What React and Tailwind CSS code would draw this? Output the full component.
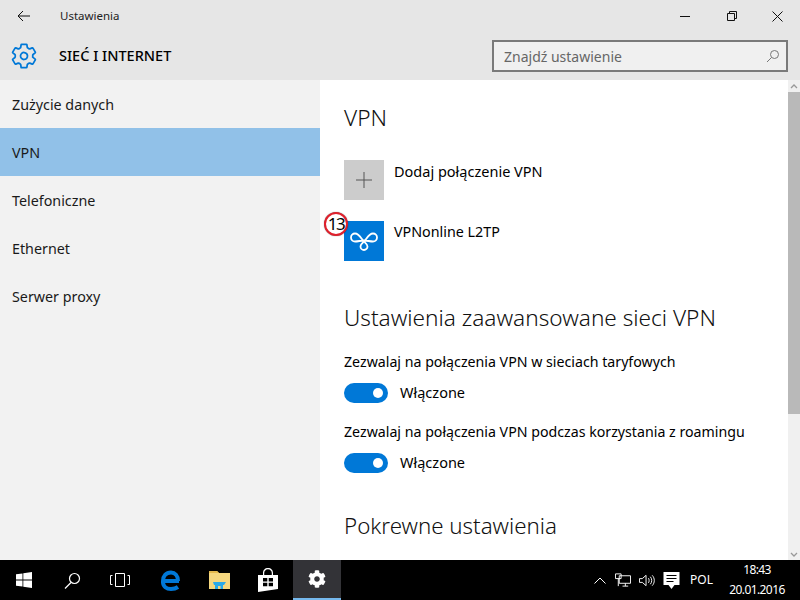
import { IoSettingsOutline } from 'react-icons/io5'
import { FaCog } from 'react-icons/fa'

function Toggle({ label }) {
  return (
    <div className="flex items-center h-5 mt-[11px]">
      <div className="w-11 h-5 rounded-full bg-[#0078d7] flex items-center justify-end pr-[5px]">
        <div className="w-[10px] h-[10px] rounded-full bg-white" />
      </div>
      <span className="ml-3 text-[14.5px] text-black">{label}</span>
    </div>
  )
}

function NavItem({ label, active }) {
  return (
    <div className={`h-12 flex items-center pl-3 pt-[2px] text-[14.3px] text-[#1a1a1a] ${active ? 'bg-[#91c1e8]' : ''}`}>
      {label}
    </div>
  )
}

export default function App() {
  const nav = ['Zużycie danych', 'VPN', 'Telefoniczne', 'Ethernet', 'Serwer proxy']

  return (
    <div className="w-[800px] h-[600px] flex flex-col overflow-hidden bg-white font-['Noto_Sans',sans-serif]">
      {/* title bar + header */}
      <div className="h-20 bg-[#e6e6e6] shrink-0">
        <div className="h-8 flex items-center">
          <svg width="14" height="12" viewBox="0 0 14 12" className="ml-[17px]" fill="none" stroke="#111" strokeWidth="1">
            <path d="M13 6H1M6 1L1 6l5 5" />
          </svg>
          <span className="ml-[29px] text-[11.5px] text-[#222]">Ustawienia</span>
          <div className="ml-auto flex items-center">
            <svg width="10" height="10" viewBox="0 0 10 10" className="mr-[37px]" stroke="#111"><path d="M0 5.5h10" /></svg>
            <svg width="10" height="10" viewBox="0 0 10 10" className="mr-[35px]" fill="none" stroke="#111"><path d="M.5 2.5h7v7h-7zM2.5 2.5v-2h7v7h-2" /></svg>
            <svg width="11" height="11" viewBox="0 0 11 11" className="mr-[17px]" stroke="#111"><path d="M.5.5l10 10M10.5.5l-10 10" /></svg>
          </div>
        </div>
        <div className="h-12 flex items-center">
          <IoSettingsOutline size={28} color="#0078d7" className="ml-[10px]" />
          <span className="ml-[21px] text-[14.5px] font-medium text-black">SIEĆ I INTERNET</span>
          <div className="ml-auto mr-[12px] w-[296px] h-8 border-2 border-[#7a7a7a] bg-[#f0f0f0] flex items-center pl-[10px] pr-[6px]">
            <span className="text-[14px] text-[#666]">Znajdź ustawienie</span>
            <svg width="14" height="14" viewBox="0 0 14 14" className="ml-auto" fill="none" stroke="#777"><circle cx="8.5" cy="5.5" r="4" /><path d="M5.5 8.5L1 13" /></svg>
          </div>
        </div>
      </div>

      {/* body */}
      <div className="flex-1 flex min-h-0">
        <div className="w-80 bg-[#f2f2f2] shrink-0">
          {nav.map((n) => <NavItem key={n} label={n} active={n === 'VPN'} />)}
        </div>

        <div className="flex-1 pl-6 overflow-hidden">
          <h1 className="text-[22.6px] font-light leading-7 mt-[24px] text-[#111]">VPN</h1>

          <div className="flex mt-[28px]">
            <div className="w-10 h-10 bg-[#cccccc] flex items-center justify-center">
              <svg width="16" height="16" viewBox="0 0 16 16" stroke="#555" strokeWidth="1"><path d="M8 0v16M0 8h16" /></svg>
            </div>
            <span className="ml-[10px] mt-[1px] text-[14.5px] text-black leading-5">Dodaj połączenie VPN</span>
          </div>

          <div className="flex mt-[21px] relative">
            <div className="w-10 h-10 bg-[#0078d7] flex items-center justify-center">
              <svg width="30" height="20" viewBox="0 0 30 20" fill="none" stroke="#fff" strokeWidth="1.8">
                <path d="M6 2.500C10 2.500 12 7 14 9.500C16 11.500 18.500 13 18.500 15.500A3.500 3.500 0 0 1 11.500 15.500C11.500 13 14 11.500 16 9.500C18 7 20 2.500 24 2.500A4 4 0 0 1 24 10.500C21 10.500 18 9.500 15 9.500C12 9.500 9 10.500 6 10.500A4 4 0 0 1 6 2.500Z" />
              </svg>
            </div>
            <span className="ml-[10px] mt-[1px] text-[14.3px] text-black leading-5">VPNonline L2TP</span>
            <div className="absolute -left-5 -top-[9px] w-6 h-6 rounded-full bg-white border-2 border-[#e0202c] shadow-[0_0_1px_rgba(0,0,0,0.6)] flex items-center justify-center text-[17px] text-black tracking-[-1.5px]">13</div>
          </div>

          <h2 className="text-[22.6px] font-light leading-7 mt-[43px] text-[#111]">Ustawienia zaawansowane sieci VPN</h2>

          <p className="text-[14.2px] leading-5 mt-[20px] text-black">Zezwalaj na połączenia VPN w sieciach taryfowych</p>
          <Toggle label="Włączone" />

          <p className="text-[14.2px] leading-5 mt-[19px] text-black">Zezwalaj na połączenia VPN podczas korzystania z roamingu</p>
          <Toggle label="Włączone" />

          <h2 className="text-[22.3px] font-light leading-7 mt-[39px] text-[#111]">Pokrewne ustawienia</h2>
        </div>

        {/* scrollbar */}
        <div className="w-3 bg-[#f0f0f0] shrink-0 flex flex-col">
          <div className="h-3 flex items-center justify-center">
            <svg width="8" height="5" viewBox="0 0 8 5" fill="none" stroke="#999" strokeWidth="1.3"><path d="M1 4l3-3 3 3" /></svg>
          </div>
          <div className="h-[322px] bg-[#b9b9b9]" />
          <div className="mt-auto h-3 flex items-center justify-center">
            <svg width="8" height="5" viewBox="0 0 8 5" fill="none" stroke="#999" strokeWidth="1.3"><path d="M1 1l3 3 3-3" /></svg>
          </div>
        </div>
      </div>

      {/* taskbar */}
      <div className="h-10 bg-black shrink-0 flex items-center text-white">
        <div className="h-10 w-12 flex items-center justify-center">
          <svg width="16" height="16" viewBox="0 0 16 16" fill="#fff"><path d="M0 2.300l6.500-.9v6.100H0zM7.300 1.300L16 0v7.500H7.300zM0 8.400h6.500v6.200L0 13.700zM7.300 8.400H16V16l-8.700-1.300z" /></svg>
        </div>
        <div className="h-10 w-12 flex items-center justify-center">
          <svg width="17" height="17" viewBox="0 0 17 17" fill="none" stroke="#fff" strokeWidth="1.2"><circle cx="10.500" cy="6.500" r="5" /><path d="M7 10.500L1 16.500" /></svg>
        </div>
        <div className="h-10 w-12 flex items-center justify-center">
          <svg width="20" height="14" viewBox="0 0 20 14" fill="none" stroke="#fff" strokeWidth="1"><path d="M5.500.5h9v13h-9zM2.500 2.500h-2v9h2M17.500 2.500h2v9h-2" /></svg>
        </div>
        <div className="h-10 w-[52px] flex items-center justify-center">
          <svg width="20" height="21" viewBox="0 0 20 21" fill="none" stroke="#0078d7" strokeWidth="4">
            <path d="M19 11H3C3 6 6 2.500 11 2.500c4 0 7 3 7 8.500M3 12c0 4.500 3.500 7 8 7 2.500 0 5-.6 7-2" />
          </svg>
        </div>
        <div className="h-10 w-[46px] flex items-center justify-center">
          <svg width="23" height="20" viewBox="0 0 23 20">
            <path d="M1 1h8l2 2h11v16H1z" fill="#f5d77e" />
            <path d="M1 1h8l2 2H1z" fill="#e4b94c" />
            <path d="M5 12h13l-2 3h-1v4h-2.500v-3h-2.500v3H7v-4H6z" fill="#29a9e8" />
          </svg>
        </div>
        <div className="h-10 w-[51px] flex items-center justify-center">
          <svg width="20" height="24" viewBox="0 0 20 24" fill="#fff">
            <path fillRule="evenodd" d="M0 7h5V5c0-3 2-5 5-5s5 2 5 5v2h5v14L0 24zM6.200 7h7.600V5c0-2-1.600-3.800-3.800-3.800S6.200 3 6.200 5zM5 10v3.500h4.300V10zM10.700 10v3.500H15V10zM5 14.800v3.500h4.300v-3.500zM10.700 14.800v3.500H15v-3.500z" />
          </svg>
        </div>
        <div className="h-10 w-12 flex items-center justify-center bg-[#333337] border-b-2 border-[#76b9ed]">
          <FaCog size={18} color="#fff" />
        </div>

        <div className="ml-auto flex items-center">
          <svg width="12" height="7" viewBox="0 0 12 7" fill="none" stroke="#fff" className="mr-[9px]"><path d="M.5 6.500l5.500-5.500 5.500 5.500" /></svg>
          <svg width="16" height="14" viewBox="0 0 17 14" fill="none" stroke="#fff" className="mr-[8px]"><path d="M4.500 2.500h12v8h-12zM8 13.500h6M11 10.500v3M.5.500h6v5h-6zM3.500 5.500v8" /></svg>
          <svg width="16" height="13" viewBox="0 0 17 13" fill="none" stroke="#fff" className="mr-[8px]"><path d="M.500 4.500h3l4-3.500v11l-4-3.500h-3zM10 4c1 1 1 4 0 5M12 2.500c2 2 2 6 0 8M14 1c3 3 3 8 0 11" /></svg>
          <svg width="17" height="17" viewBox="0 0 16 17" className="mr-[10px]"><path fillRule="evenodd" fill="#fff" d="M0 0h16v13h-5l-3 4-3-4H0zM3 3v1h10V3zM3 6v1h10V6zM3 9v1h7V9z" /></svg>
          <span className="text-[12px] mr-[16px]">POL</span>
          <div className="flex flex-col items-center text-[12px] tracking-[-0.6px] leading-[20px] mr-[15px] w-[56px]">
            <span>18:43</span>
            <span>20.01.2016</span>
          </div>
        </div>
      </div>
    </div>
  )
}
